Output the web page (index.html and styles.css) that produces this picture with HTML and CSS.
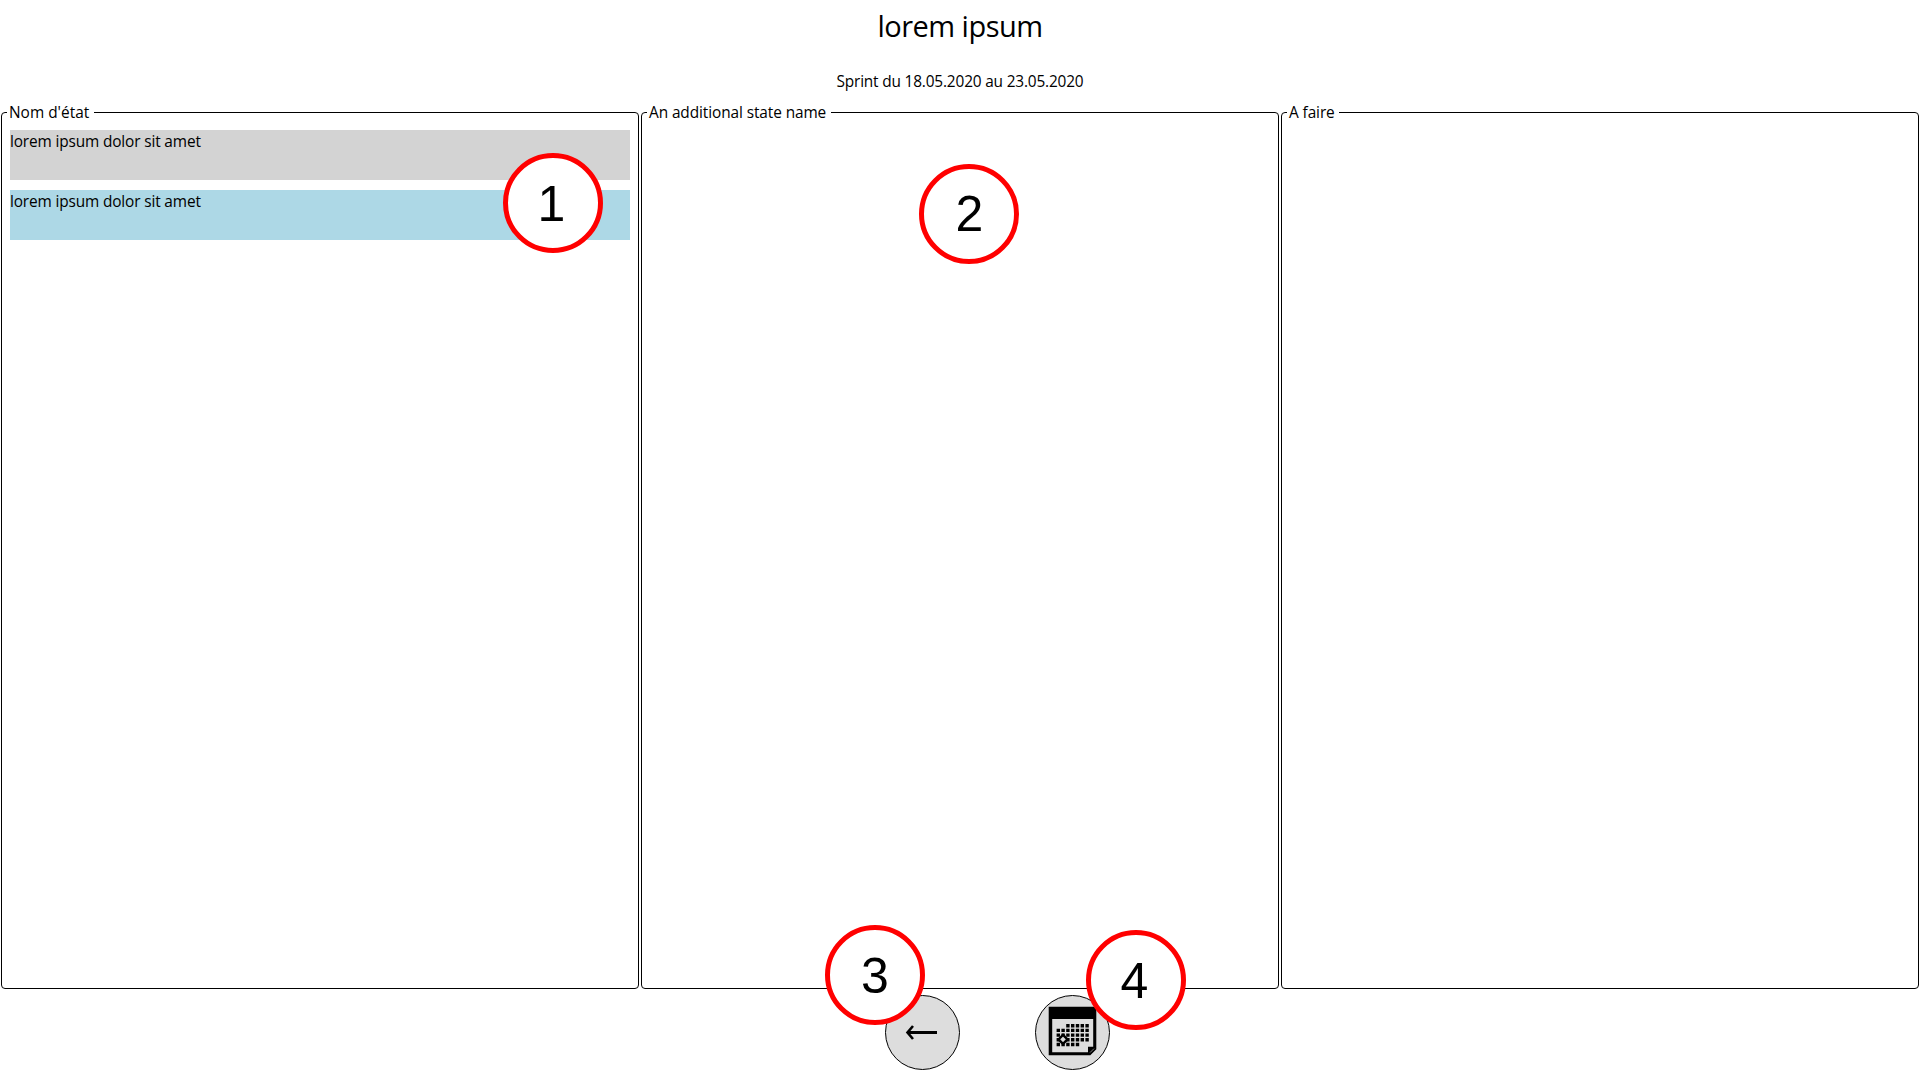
FILE: index.html
```html
<!DOCTYPE html>
<html lang="fr">
<head>
<meta charset="utf-8">
<title>lorem ipsum</title>
<link rel="stylesheet" href="styles.css">
</head>
<body>
<header class="header">
  <h1 class="title">lorem ipsum</h1>
  <p class="dates">Sprint du 18.05.2020 au 23.05.2020</p>
</header>
<main class="board">
  <fieldset class="state">
    <legend class="state-name state-name-first">Nom d'état</legend>
    <div class="card card-grey">lorem ipsum dolor sit amet</div>
    <div class="card card-blue">lorem ipsum dolor sit amet</div>
  </fieldset>
  <fieldset class="state">
    <legend class="state-name">An additional state name</legend>
  </fieldset>
  <fieldset class="state">
    <legend class="state-name">A faire</legend>
  </fieldset>
</main>
<footer class="actions">
  <button class="action" type="button" aria-label="Retour">
    <svg width="55" height="57" viewBox="-1 0 55 57">
      <path d="M12 28.5H41" fill="none" stroke="#000" stroke-width="3"/>
      <path d="M17 22L11.5 28.5L17 35" fill="none" stroke="#000" stroke-width="2.6"/>
    </svg>
  </button>
  <button class="action" type="button" aria-label="Calendrier">
    <svg width="55" height="57" viewBox="-1 0 55 57">
      <path fill-rule="evenodd" d="M2.7 2.8H50.3V45.2L44.3 51.2H2.7ZM6.2 15V48.2H42V42.8H47.2V15Z"/>
      <path d="M44 48.6L48 44.6" stroke="#ddd" stroke-width=".6"/>
      <g fill="none" stroke="#000" stroke-width="3.4">
        <path d="M20.2 21.7H43" stroke-dasharray="3.4 1.4"/>
        <path d="M10.6 26.4H43" stroke-dasharray="3.4 1.4"/>
        <path d="M10.6 31.1H43" stroke-dasharray="3.4 1.4"/>
        <path d="M10.6 35.8H43" stroke-dasharray="3.4 1.4"/>
        <path d="M10.6 40.5H33.2" stroke-dasharray="3.4 1.4"/>
      </g>
      <path d="M17 30.9L21.5 35.4L17 39.9L12.5 35.4Z" fill="#ddd" stroke="#000" stroke-width="2.4"/>
    </svg>
  </button>
</footer>
<div class="badge badge-1">1</div>
<div class="badge badge-2">2</div>
<div class="badge badge-3">3</div>
<div class="badge badge-4">4</div>
</body>
</html>
```
FILE: styles.css
```css
* {
  box-sizing: border-box;
}

body {
  position: relative;
  display: flex;
  flex-direction: column;
  height: 1080px;
  margin: 0;
  overflow: hidden;
  background: #fff;
  color: #000;
  font: 15.4px/22px "Open Sans", sans-serif;
}

.header {
  display: flex;
  flex-direction: column;
  align-items: center;
  gap: 25px;
  padding: 6px 0 8px;
}

.title {
  margin: 0;
  font-size: 29px;
  line-height: 40px;
  font-weight: 400;
  letter-spacing: -0.52px;
}

.dates {
  margin: 0;
  letter-spacing: -0.17px;
}

.board {
  display: grid;
  grid-template-columns: repeat(3, 1fr);
  gap: 2px;
  height: 888px;
  padding: 0 1px;
}

.state {
  min-width: 0;
  margin: 0;
  padding: 6px 8px 0;
  border: 1px solid #000;
  border-radius: 4px;
}

.state-name {
  margin-left: -3px;
  padding: 1px 4.5px 0 2px;
  letter-spacing: -0.09px;
}

.state-name-first {
  letter-spacing: 0.02px;
}

.card {
  height: 50px;
  margin-bottom: 10px;
  padding-top: 1px;
  letter-spacing: -0.14px;
}

.card-grey {
  background: lightgray;
}

.card-blue {
  background: lightblue;
}

.actions {
  display: flex;
  gap: 75px;
  padding: 6px 0 0 885px;
}

.action {
  display: flex;
  align-items: center;
  justify-content: center;
  width: 75px;
  height: 75px;
  padding: 0;
  border: 1px solid #000;
  border-radius: 50%;
  background: #ddd;
}

.badge {
  position: absolute;
  width: 100px;
  height: 100px;
  border: 5px solid #f00;
  border-radius: 50%;
  background: #fff;
  font: 50px/90px "Liberation Sans", Arial, sans-serif;
  text-align: center;
}

.badge-1 {
  left: 503px;
  top: 153px;
  padding-right: 3px;
  line-height: 92px;
}

.badge-2 {
  left: 919px;
  top: 164px;
  padding-left: 1px;
}

.badge-3 {
  left: 825px;
  top: 925px;
  line-height: 92px;
}

.badge-4 {
  left: 1086px;
  top: 930px;
  padding-right: 3px;
  line-height: 92px;
}
```
